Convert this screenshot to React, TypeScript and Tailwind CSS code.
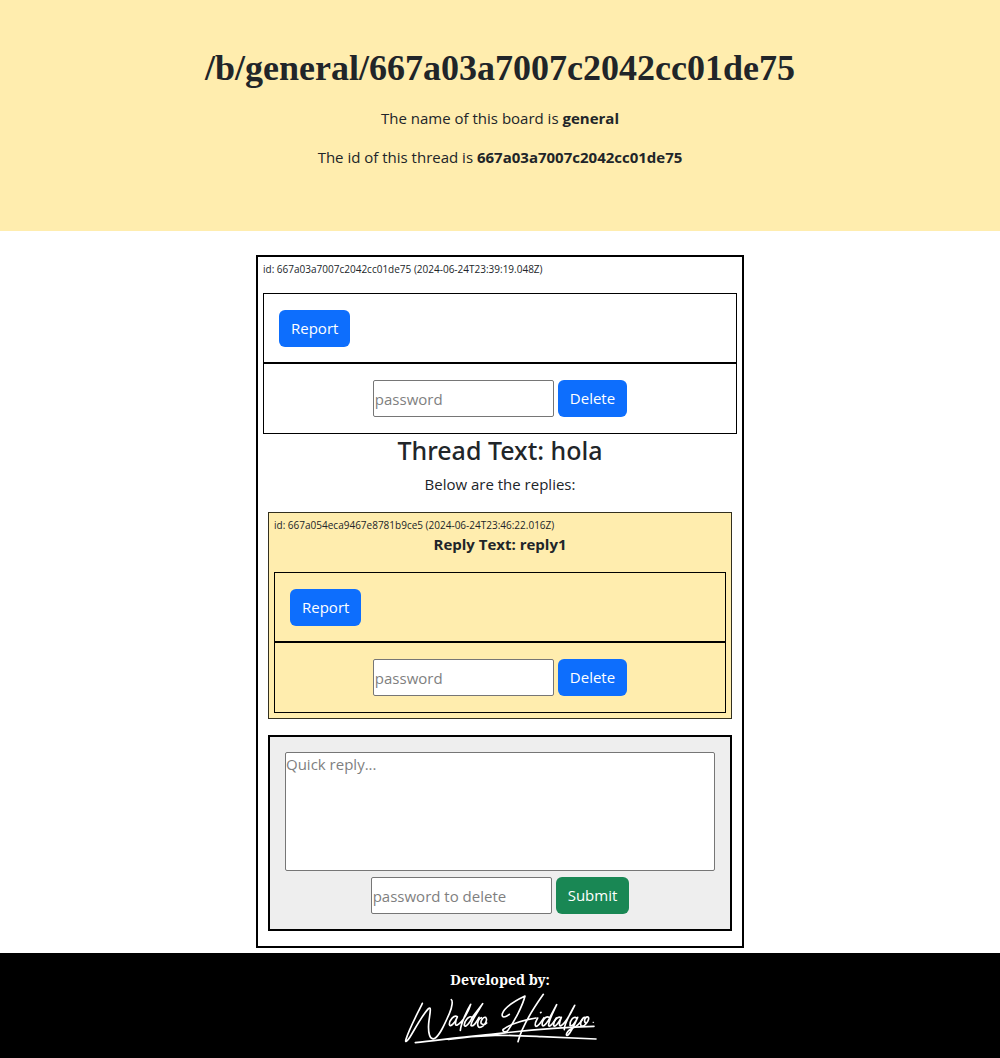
import type { ReactNode } from 'react';

const fieldClass =
  'h-[37px] w-[181px] rounded-[2px] border border-[#767676] bg-white px-px text-[15px] text-[#212529] placeholder:text-[#7f7f7f]';

type ButtonProps = { children: ReactNode; tone?: 'primary' | 'success' };

function Button({ children, tone = 'primary' }: ButtonProps) {
  const color = tone === 'primary' ? 'bg-[#0d6efd]' : 'bg-[#198754]';
  return (
    <button type="submit" className={`h-[37px] rounded-[6px] px-3 text-[15px] text-white ${color}`}>
      {children}
    </button>
  );
}

function ModerationForms({ name }: { name: string }) {
  return (
    <div>
      <form className="flex border border-black px-[15px] pt-4 pb-[15px]" onSubmit={(e) => e.preventDefault()}>
        <Button>Report</Button>
      </form>
      <form
        className="flex justify-center gap-1 border border-black p-4"
        onSubmit={(e) => e.preventDefault()}
      >
        <input type="text" aria-label={`${name} password`} placeholder="password" className={fieldClass} />
        <Button>Delete</Button>
      </form>
    </div>
  );
}

function Signature() {
  return (
    <svg
      viewBox="30 75 600 165"
      className="h-[55px] w-[200px]"
      fill="none"
      stroke="#fff"
      strokeLinecap="round"
      strokeLinejoin="round"
      role="img"
      aria-label="Waldo Hidalgo"
    >
      <g strokeWidth="5">
        <path d="M97 115 C83 145 58 190 48 223 C44 236 53 227 60 216 C76 190 96 151 116 130 C126 123 118 152 116 176 C114 203 119 225 132 221 C150 213 164 176 178 146 C188 124 188 106 184 104" />
        <path d="M202 155 C192 148 178 166 178 178 C180 190 196 172 202 156 C195 170 194 184 202 180 C219 172 237 136 242 118 C233 132 213 174 211 196" />
        <path d="M246 157 C237 149 222 170 223 181 C228 190 241 170 247 157 L278 116 C265 138 241 171 243 182 C250 187 261 169 267 157" />
        <path d="M274 158 C262 162 259 186 269 187 C283 187 296 162 286 157 C279 155 270 170 274 176 C279 180 286 178 290 174" />
        <path d="M358 148 C346 158 334 160 337 146 C344 126 380 105 405 93 C398 122 373 169 356 193 C350 205 334 200 340 193" />
        <path d="M460 88 C438 119 397 180 384 230 M340 193 C366 174 402 165 438 159" />
        <path d="M443 159 C438 168 433 181 438 184 C445 185 454 170 462 158 M452 143 L453 142" />
        <path d="M477 157 C466 151 454 170 457 181 C462 188 476 167 482 153 L500 119 C488 145 474 171 476 182 C481 188 493 169 499 159" />
        <path d="M513 158 C503 151 489 170 491 182 C497 188 508 169 514 157 C508 171 506 184 512 183 C526 175 545 140 554 121 C541 145 521 179 523 194" />
        <path d="M560 159 C550 151 538 170 540 181 C546 188 559 168 563 157 C554 178 542 203 533 211 C525 214 529 197 549 189 C562 184 571 173 578 162" />
        <path d="M588 158 C577 154 568 175 574 183 C584 187 602 161 594 156 C586 153 580 169 587 174" />
      </g>
      <path d="M76 233 C143 226 204 217 273 211 C376 201 457 188 612 184 M175 223 C285 206 366 211 455 215 Q540 219 618 222" strokeWidth="5" />
      <path d="M609 172h2" strokeWidth="3" />
    </svg>
  );
}

export default function App() {
  return (
    <div className="bg-white font-['Open_Sans','Noto_Sans',sans-serif] text-[15px] leading-[23px] text-[#212529]">
      <header className="bg-[#ffedae] px-4 pt-[46px] pb-[62px] text-center">
        <h1 className="mb-4 font-['Liberation_Serif',serif] text-[36px] leading-[45px] font-bold">
          /b/general/667a03a7007c2042cc01de75
        </h1>
        <p className="mb-4">
          The name of this board is <b>general</b>
        </p>
        <p>
          The id of this thread is <b>667a03a7007c2042cc01de75</b>
        </p>
      </header>

      <main className="mx-auto mt-6 mb-[5px] w-[488px] max-w-full border-2 border-black p-[5px]">
        <p className="mb-4 text-[10px] leading-[15px]">id: 667a03a7007c2042cc01de75 (2024-06-24T23:39:19.048Z)</p>
        <ModerationForms name="Thread" />
        <h2 className="mt-px mb-[7px] text-center font-['Noto_Sans',sans-serif] text-[25px] leading-[31px] font-medium">
          Thread Text: hola
        </h2>
        <p className="mb-4 text-center">Below are the replies:</p>

        <section className="mx-[5px] mb-4 border border-[#33301f] bg-[#ffedae] p-[5px]">
          <p className="text-[10px] leading-[15px]">id: 667a054eca9467e8781b9ce5 (2024-06-24T23:46:22.016Z)</p>
          <p className="mb-4 text-center font-bold">Reply Text: reply1</p>
          <ModerationForms name="Reply" />
        </section>

        <form
          className="mx-[5px] mb-2.5 border-2 border-black bg-[#eeeeee] p-[15px]"
          onSubmit={(e) => e.preventDefault()}
        >
          <textarea
            aria-label="Quick reply"
            placeholder="Quick reply..."
            className="mb-1.5 block h-[119px] w-full resize-none rounded-[2px] border border-[#767676] bg-white placeholder:text-[#7f7f7f]"
          />
          <div className="flex justify-center gap-1">
            <input
              type="text"
              aria-label="Password to delete"
              placeholder="password to delete"
              className={fieldClass}
            />
            <Button tone="success">Submit</Button>
          </div>
        </form>
      </main>

      <footer className="flex flex-col items-center bg-black pt-4 pb-[14px] text-white">
        <p className="font-['Noto_Serif','DejaVu_Serif',serif] text-[14px] leading-[21px] font-bold">Developed by:</p>
        <Signature />
      </footer>
    </div>
  );
}
